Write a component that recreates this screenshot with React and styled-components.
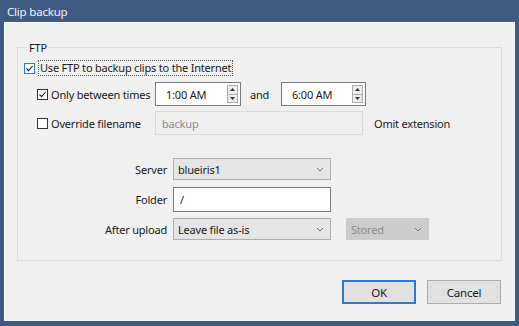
import React from 'react';
import styled, { createGlobalStyle } from 'styled-components';

const GlobalStyle = createGlobalStyle`
	html, body {
		margin: 0;
		padding: 0;
		background: #3f5b83;
	}
	body {
		font-family: "Noto Sans", "Open Sans", sans-serif;
		font-size: 11px;
		letter-spacing: -0.2px;
		color: #1a1a1a;
	}
`;

const Window = styled.div`
	width: 519px;
	height: 326px;
	box-sizing: border-box;
	background: #3f5b83;
	display: flex;
	flex-direction: column;
	padding: 0 4px 5px 4px;
`;

const TitleBar = styled.div`
	height: 22px;
	display: flex;
	align-items: center;
	padding-left: 3px;
	color: #eef2f8;
	font-size: 11.5px;
`;

const Body = styled.div`
	flex: 1;
	background: #f0f0f0;
	border: 1px solid #fbfbfb;
	padding: 17px 12px 0 12px;
	display: flex;
	flex-direction: column;
`;

const Group = styled.fieldset`
	margin: 0;
	padding: 0 0 0 6px;
	border: 1px solid #dcdcdc;
	height: 221px;
	box-sizing: border-box;
	display: flex;
	flex-direction: column;
`;

const Legend = styled.legend`
	padding: 0 2px;
	margin-left: 3px;
	color: #1a1a1a;
`;

const Row = styled.div`
	display: flex;
	align-items: center;
	height: ${p => p.h || 26}px;
	margin-left: ${p => p.indent || 0}px;
	margin-top: ${p => p.mt || 0}px;
`;

const Check = styled.label`
	display: flex;
	align-items: center;
	gap: 3px;
	flex-shrink: 0;
	width: ${p => p.w || 'auto'};
	white-space: nowrap;
`;

const Box = styled.span`
	flex-shrink: 0;
	width: 11px;
	height: 11px;
	box-sizing: border-box;
	border: 1px solid ${p => p.blue ? '#2f7bd4' : '#333'};
	background: #fff;
	display: flex;
	align-items: center;
	justify-content: center;
`;

const Focus = styled.span`
	border: 1px dotted #555;
	padding: 0 1px;
	line-height: 14px;
`;

const Plain = styled.span`
	flex-shrink: 0;
	white-space: nowrap;
	padding-left: ${p => p.pl || 0}px;
	width: ${p => p.w ? p.w + 'px' : 'auto'};
	box-sizing: border-box;
`;

const Field = styled.div`
	flex-shrink: 0;
	width: ${p => p.w}px;
	height: ${p => p.h || 24}px;
	box-sizing: border-box;
	border: 1px solid ${p => p.disabled ? '#d9d9d9' : '#7a7a7a'};
	background: ${p => p.disabled ? '#f0f0f0' : '#fff'};
	color: ${p => p.disabled ? '#8a8a8a' : '#1a1a1a'};
	display: flex;
	align-items: center;
	padding-left: ${p => p.pl || 6}px;
	margin-left: ${p => p.ml || 0}px;
`;

const TimeText = styled.span`
	flex: 1;
`;

const Spinner = styled.div`
	width: 11px;
	height: 18px;
	margin-right: 2px;
	display: flex;
	flex-direction: column;
	border: 1px solid #adadad;
	box-sizing: border-box;
	background: #ececec;
`;

const SpinHalf = styled.div`
	flex: 1;
	display: flex;
	align-items: center;
	justify-content: center;
	& + & {
		border-top: 1px solid #adadad;
	}
`;

const Select = styled.div`
	flex-shrink: 0;
	width: ${p => p.w}px;
	height: 22px;
	box-sizing: border-box;
	border: 1px solid ${p => p.disabled ? '#cccccc' : '#acacac'};
	background: ${p => p.disabled ? '#cccccc' : '#e5e5e5'};
	color: ${p => p.disabled ? '#8d8d8d' : '#1a1a1a'};
	display: flex;
	align-items: center;
	justify-content: space-between;
	padding: 0 6px 0 4px;
	margin-left: ${p => p.ml || 0}px;
`;

const FormRow = styled.div`
	display: flex;
	align-items: center;
	height: ${p => p.h || 25}px;
	margin-top: ${p => p.mt || 0}px;
`;

const FormLabel = styled.span`
	width: 149px;
	text-align: right;
	padding-right: 6px;
	box-sizing: border-box;
`;

const Footer = styled.div`
	display: flex;
	justify-content: flex-end;
	gap: 11px;
	margin-top: 19px;
	padding-right: 1px;
`;

const Button = styled.div`
	width: 74px;
	height: 24px;
	box-sizing: border-box;
	border: ${p => p.primary ? '2px solid #2a7bd0' : '1px solid #adadad'};
	background: #e1e1e1;
	display: flex;
	align-items: center;
	justify-content: center;
	font-size: 11.5px;
`;

const Chevron = () => (
	<svg width="8" height="5" viewBox="0 0 8 5">
		<path d="M1 1 L4 4 L7 1" fill="none" stroke="#777" strokeWidth="1" />
	</svg>
);

const Tick = () => (
	<svg width="9" height="9" viewBox="0 0 9 9">
		<path d="M1.5 4.5 L3.6 6.6 L7.6 2" fill="none" stroke="#222" strokeWidth="1.1" />
	</svg>
);

const Arrow = ({ up }) => (
	<svg width="5" height="3" viewBox="0 0 5 3">
		<path d={up ? 'M0 3 L2.5 0 L5 3 Z' : 'M0 0 L2.5 3 L5 0 Z'} fill="#333" />
	</svg>
);

const TimeField = ({ value, w }) => (
	<Field w={w} pl={10}>
		<TimeText>{value}</TimeText>
		<Spinner>
			<SpinHalf><Arrow up /></SpinHalf>
			<SpinHalf><Arrow /></SpinHalf>
		</Spinner>
	</Field>
);

export default function App() {
	return (
		<>
			<GlobalStyle />
			<Window>
				<TitleBar>Clip backup</TitleBar>
				<Body>
					<Group>
						<Legend>FTP</Legend>
						<Row h={20} mt={3}>
							<Check>
								<Box blue><Tick /></Box>
								<Focus>Use FTP to backup clips to the Internet</Focus>
							</Check>
						</Row>
						<Row h={26} mt={3} indent={13}>
							<Check w="118px">
								<Box><Tick /></Box>
								Only between times
							</Check>
							<TimeField value="1:00 AM" w={86} />
							<Plain w={40} pl={9}>and</Plain>
							<TimeField value="6:00 AM" w={85} />
						</Row>
						<Row h={26} mt={3} indent={13}>
							<Check w="118px">
								<Box />
								Override filename
							</Check>
							<Field w={208} disabled>backup</Field>
							<Plain pl={11}>Omit extension</Plain>
						</Row>
						<FormRow mt={21} h={24}>
							<FormLabel>Server</FormLabel>
							<Select w={158}>blueiris1<Chevron /></Select>
						</FormRow>
						<FormRow mt={6} h={25}>
							<FormLabel>Folder</FormLabel>
							<Field w={158} h={25} pl={6}>/</Field>
						</FormRow>
						<FormRow mt={5} h={24}>
							<FormLabel>After upload</FormLabel>
							<Select w={158}>Leave file as-is<Chevron /></Select>
							<Select w={83} ml={15} disabled>Stored<Chevron /></Select>
						</FormRow>
					</Group>
					<Footer>
						<Button primary>OK</Button>
						<Button>Cancel</Button>
					</Footer>
				</Body>
			</Window>
		</>
	);
}
